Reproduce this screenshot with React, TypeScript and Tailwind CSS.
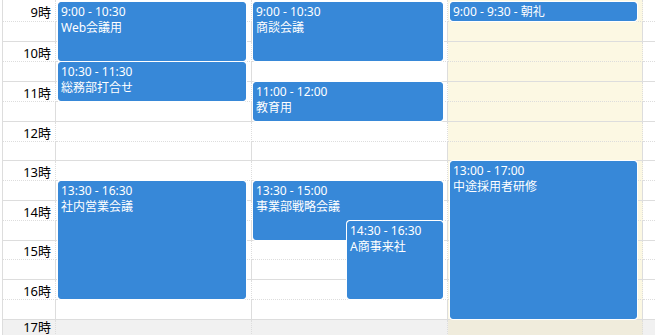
import React from "react";

type Ev = { cls: string; lines: string[] };

const rowHeights = [22, 20, 20, 20, 20, 20, 20, 19, 20, 20, 20, 20, 19, 20, 20, 20, 20];
const rowHClass: Record<number, string> = { 22: "h-[22px]", 20: "h-[20px]", 19: "h-[19px]" };

const col1: Ev[] = [
  { cls: "top-[2px] h-[59px] left-[2px] w-[188px]", lines: ["9:00 - 10:30", "Web会議用"] },
  { cls: "top-[62px] h-[39px] left-[2px] w-[188px]", lines: ["10:30 - 11:30", "総務部打合せ"] },
  { cls: "top-[181px] h-[118px] left-[2px] w-[188px]", lines: ["13:30 - 16:30", "社内営業会議"] },
];
const col2: Ev[] = [
  { cls: "top-[2px] h-[59px] left-[1px] w-[190px]", lines: ["9:00 - 10:30", "商談会議"] },
  { cls: "top-[82px] h-[39px] left-[1px] w-[190px]", lines: ["11:00 - 12:00", "教育用"] },
  { cls: "top-[181px] h-[59px] left-[1px] w-[190px]", lines: ["13:30 - 15:00", "事業部戦略会議"] },
  { cls: "top-[221px] h-[78px] left-[95px] w-[96px]", lines: ["14:30 - 16:30", "A商事来社"] },
];
const col3: Ev[] = [
  { cls: "top-[2px] h-[19px] left-[2px] w-[187px]", lines: ["9:00 - 9:30 - 朝礼"] },
  { cls: "top-[161px] h-[158px] left-[2px] w-[187px]", lines: ["13:00 - 17:00", "中途採用者研修"] },
];

function Event({ ev }: { ev: Ev }) {
  return (
    <div
      className={`absolute ${ev.cls} bg-[#3788d8] border border-[#3788d8] rounded-[3px] ring-1 ring-white text-white text-[12px] leading-[16px] px-[2px] pt-[1px] overflow-hidden whitespace-nowrap`}
    >
      {ev.lines.map((l, i) => (
        <div key={i}>{l}</div>
      ))}
    </div>
  );
}

export default function App() {
  return (
    <div className="w-[655px] h-[335px] overflow-hidden bg-white font-['Noto_Sans','Noto_Sans_CJK_JP',sans-serif]">
      <div className="relative ml-[2px] border-l border-[#dddddd]">
        {rowHeights.map((h, i) => {
          const minor = i % 2 === 0;
          const gray = i === 16;
          const bcls = minor ? "border-b border-dotted" : "border-b border-solid";
          return (
            <div key={i} className={`flex ${rowHClass[h]}`}>
              <div
                className={`w-[53px] shrink-0 border-r border-r-[#dddddd] border-b-[#dddddd] ${bcls} ${gray ? "bg-[#f1f1f1]" : "bg-white"} flex justify-end pr-[4px] ${gray ? "items-start pt-[1px]" : "items-center pt-[3px]"} text-[13px] text-black leading-none`}
              >
                {minor ? `${9 + i / 2}時` : ""}
              </div>
              <div className={`w-[196px] shrink-0 border-r border-r-[#dddddd] border-b-[#dddddd] ${bcls} ${gray ? "bg-[#f1f1f1]" : "bg-white"}`} />
              <div className={`w-[196px] shrink-0 border-r border-r-[#dddddd] border-b-[#dddddd] ${bcls} ${gray ? "bg-[#f1f1f1]" : "bg-white"}`} />
              <div className={`w-[195px] shrink-0 border-r border-r-[#dddddd] border-b-[#dddddd] ${bcls} ${gray ? "bg-[#f0ecdc]" : "bg-[#fcf8e3]"}`} />
              <div className={`flex-1 border-b-[#dddddd] ${bcls} ${gray ? "bg-[#f1f1f1]" : "bg-white"}`} />
            </div>
          );
        })}
        <div className="absolute inset-0 flex pointer-events-none">
          <div className="w-[53px] shrink-0" />
          <div className="relative w-[196px] shrink-0">
            {col1.map((e, i) => (
              <Event key={i} ev={e} />
            ))}
          </div>
          <div className="relative w-[196px] shrink-0">
            {col2.map((e, i) => (
              <Event key={i} ev={e} />
            ))}
          </div>
          <div className="relative w-[195px] shrink-0">
            {col3.map((e, i) => (
              <Event key={i} ev={e} />
            ))}
          </div>
        </div>
      </div>
    </div>
  );
}
